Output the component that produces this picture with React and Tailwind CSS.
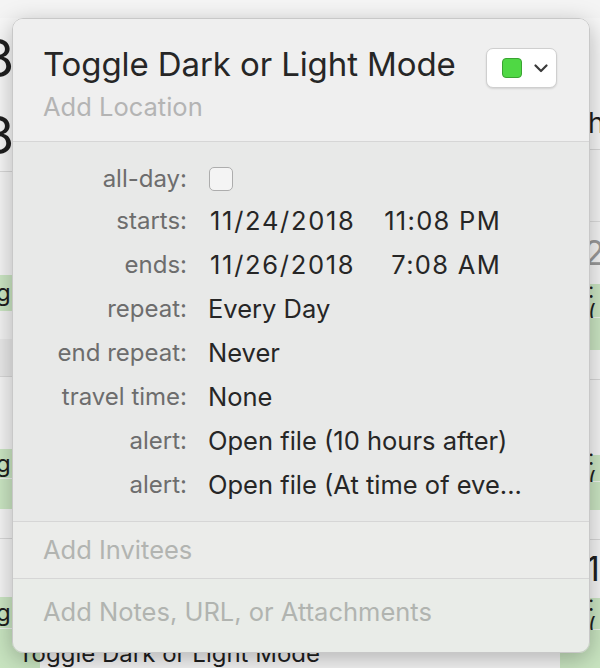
import React from 'react';

const rows = [
  { label: 'all-day:', type: 'check' },
  { label: 'starts:', date: '11/24/2018', time: '11:08 PM' },
  { label: 'ends:', date: '11/26/2018', time: '7:08 AM' },
  { label: 'repeat:', value: 'Every Day' },
  { label: 'end repeat:', value: 'Never' },
  { label: 'travel time:', value: 'None' },
  { label: 'alert:', value: 'Open file (10 hours after)' },
  { label: 'alert:', value: 'Open file (At time of eve...' },
];

const LeftEdge = () => (
  <div className="w-[40px] shrink-0 overflow-hidden flex flex-col text-[#1f1f1f]">
    <div className="h-[18px] bg-[#f4f4f4]" />
    <div className="h-[82px] bg-[#f7f7f7] flex items-center">
      <span className="-ml-[18px] text-[52px] leading-none">8</span>
    </div>
    <div className="h-[72px] bg-[#f7f7f7] flex items-center border-b border-[#d8d8d8]">
      <span className="-ml-[18px] text-[52px] leading-none">8</span>
    </div>
    <div className="h-[103px] bg-[#f5f5f5]" />
    <div className="h-[36px] bg-[#cbe6c3] rounded-r-[18px] flex items-center">
      <span className="-ml-[4px] text-[24px] leading-none">gh</span>
    </div>
    <div className="h-[28px] bg-[#f3f3f3]" />
    <div className="h-[38px] bg-[#e9e9e9] rounded-tr-[18px] border-b border-[#d8d8d8]" />
    <div className="h-[72px] bg-[#f5f5f5]" />
    <div className="h-[30px] bg-[#cbe6c3] flex items-center border-b border-[#f0f0f0]">
      <span className="-ml-[4px] text-[24px] leading-none">gh</span>
    </div>
    <div className="h-[30px] bg-[#cbe6c3]" />
    <div className="h-[30px] bg-[#f5f5f5] border-b border-[#d8d8d8]" />
    <div className="h-[58px] bg-[#f5f5f5]" />
    <div className="h-[32px] bg-[#cbe6c3] flex items-center border-b border-[#f0f0f0]">
      <span className="-ml-[4px] text-[24px] leading-none">gh</span>
    </div>
    <div className="flex-1 bg-[#c9e5c1]" />
  </div>
);

const RightEdge = () => (
  <div className="w-[40px] shrink-0 overflow-hidden flex flex-col text-[#1f1f1f]">
    <div className="h-[18px] bg-[#f4f4f4]" />
    <div className="h-[132px] bg-[#f7f7f7] flex items-end pb-[12px] border-b border-[#d8d8d8]">
      <span className="ml-[10px] text-[28px] leading-none">Th</span>
    </div>
    <div className="h-[72px] bg-[#f5f5f5] border-b border-[#dddddd]" />
    <div className="h-[62px] bg-[#f5f5f5] flex items-center">
      <span className="ml-[24px] text-[34px] leading-none text-[#9a9a9a]">2</span>
    </div>
    <div className="h-[34px] bg-[#cbe6c3] border-b border-[#eef5ec] flex items-center">
      <span className="ml-[28px] text-[22px] leading-none">: (</span>
    </div>
    <div className="h-[32px] bg-[#cbe6c3]" />
    <div className="h-[30px] bg-[#f5f5f5] border-b border-[#d8d8d8]" />
    <div className="h-[75px] bg-[#f5f5f5]" />
    <div className="h-[27px] bg-[#cbe6c3] border-b border-[#eef5ec] flex items-center">
      <span className="ml-[28px] text-[22px] leading-none">: (</span>
    </div>
    <div className="h-[28px] bg-[#cbe6c3]" />
    <div className="h-[30px] bg-[#f5f5f5] border-b border-[#d8d8d8]" />
    <div className="h-[58px] bg-[#f5f5f5] flex items-center">
      <span className="ml-[26px] text-[34px] leading-none">1</span>
    </div>
    <div className="h-[32px] bg-[#cbe6c3] border-b border-[#eef5ec] flex items-center">
      <span className="ml-[28px] text-[22px] leading-none">: (</span>
    </div>
    <div className="flex-1 bg-[#c9e5c1]" />
  </div>
);

const Popover = () => (
  <div className="absolute left-[12px] top-[18px] w-[578px] h-[635px] rounded-[11px] overflow-hidden border border-[#c8c8c8] shadow-[0_6px_24px_rgba(0,0,0,0.28)] flex flex-col">
    <div className="h-[123px] bg-[#efefef] border-b border-[#d6d6d6] px-[30px] pt-[25px]">
      <div className="flex items-start justify-between">
        <h1 className="text-[33px] leading-[40px] text-[#262626] tracking-[-0.1px]">Toggle Dark or Light Mode</h1>
        <div className="mt-[4px] mr-[2px] w-[71px] h-[40px] bg-white rounded-[7px] border border-[#cfcfcf] shadow-[0_1px_2px_rgba(0,0,0,0.12)] flex items-center pl-[15px] gap-[12px]">
          <div className="w-[20px] h-[20px] rounded-[4px] bg-[#4fd844] border border-[#3aa332]" />
          <svg width="14" height="9" viewBox="0 0 14 9" fill="none">
            <path d="M1.5 1.5 L7 7 L12.5 1.5" stroke="#3a3a3a" strokeWidth="2.2" strokeLinecap="round" strokeLinejoin="round" />
          </svg>
        </div>
      </div>
      <div className="text-[25.5px] leading-[30px] mt-[4px] text-[#b4b4b4]">Add Location</div>
    </div>

    <div className="h-[380px] bg-[#e8e9e8] border-b border-[#d6d6d6] pt-[16px]">
      {rows.map((r, i) => (
        <div key={i} className={i === 0 ? 'h-[41px] flex items-center' : 'h-[44px] flex items-center'}>
          <div className="w-[174px] text-right text-[24px] text-[#6d6d6d]">{r.label}</div>
          <div className="ml-[21px] text-[25.5px] text-[#262626] flex items-center">
            {r.type === 'check' && (
              <div className="ml-[1px] w-[24px] h-[24px] rounded-[5px] border border-[#adadad] bg-[#f4f4f4]" />
            )}
            {r.date && (
              <>
                <span className="ml-[2px] w-[160px] tracking-[1.7px]">{r.date}</span>
                <span className="w-[131px] text-right tracking-[1.3px]">{r.time}</span>
              </>
            )}
            {r.value && <span>{r.value}</span>}
          </div>
        </div>
      ))}
    </div>

    <div className="h-[57px] bg-[#ebecea] border-b border-[#d6d6d6] px-[30px] flex items-center">
      <span className="text-[25.5px] text-[#b2b4b1]">Add Invitees</span>
    </div>
    <div className="flex-1 bg-[#e9ece8] px-[30px] pt-[14px]">
      <span className="text-[25.5px] text-[#b1b4b0]">Add Notes, URL, or Attachments</span>
    </div>
  </div>
);

export default function App() {
  return (
    <div className="relative w-[600px] h-[668px] overflow-hidden flex justify-between bg-[#f5f5f5] font-['Inter','Liberation_Sans',sans-serif]">
      <LeftEdge />
      <div className="flex-1 bg-[#f5f5f5]" />
      <RightEdge />
      <div className="absolute left-[18px] top-[642px] text-[24px] leading-none text-[#1f1f1f] whitespace-nowrap">
        Toggle Dark or Light Mode
      </div>
      <Popover />
    </div>
  );
}
